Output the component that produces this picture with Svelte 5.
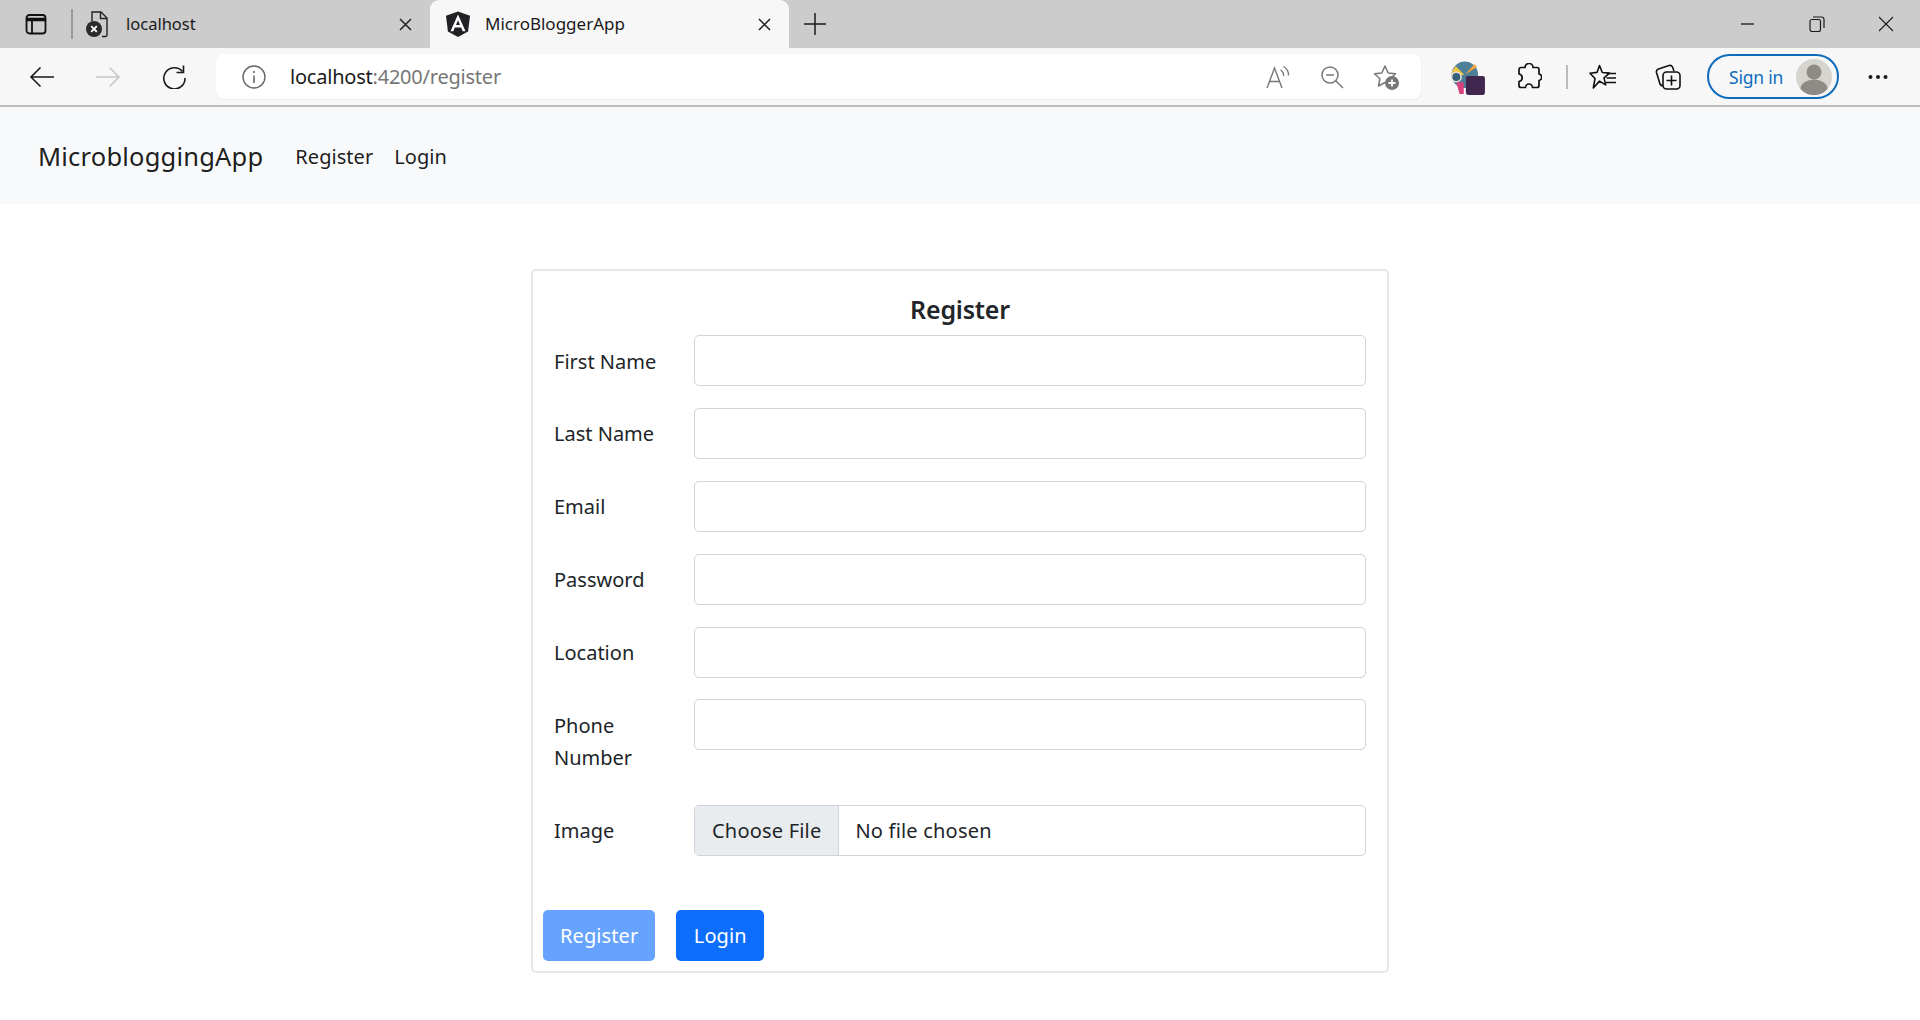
<script>
	const fields = ["First Name", "Last Name", "Email", "Password", "Location", "Phone Number"];
</script>

<div class="chrome">
	<div class="tabstrip">
		<svg class="sidebar-icon" width="22" height="22" viewBox="0 0 22 22" fill="none" stroke="#111" stroke-width="1.800">
			<rect x="1.500" y="2" width="19" height="18.500" rx="3" />
			<path d="M1.500 6.500h19" stroke-width="3.500" />
			<path d="M7 7v13" />
		</svg>
		<span class="tab-divider"></span>
		<div class="tab inactive">
			<svg width="22" height="28" viewBox="0 0 22 28" fill="none">
				<path d="M6 11V2h9l6 6v17a1.500 1.500 0 0 1-1.500 1.500H16" stroke="#222" stroke-width="1.400" />
				<path d="M14.500 2v6.500H21" stroke="#222" stroke-width="1.400" />
				<circle cx="8" cy="19" r="8" fill="#2b2b2b" />
				<path d="M5.200 16.200l5.600 5.600M10.800 16.200l-5.600 5.600" stroke="#fff" stroke-width="1.900" />
			</svg>
			<span class="tab-title">localhost</span>
			<svg class="close" width="13" height="13" viewBox="0 0 13 13" stroke="#1f1f1f" stroke-width="1.500"><path d="M1 1l11 11M12 1L1 12" /></svg>
		</div>
		<div class="tab active">
			<svg width="26" height="26" viewBox="0 0 26 26">
				<path d="M13 0.500L1 4.800l1.900 15.800L13 26l10.100-5.400L25 4.800z" fill="#202124" />
				<path d="M13 3.500L5.500 20.200h2.800l1.500-3.800h6.400l1.500 3.800h2.800zM11 14l2-4.800 2 4.800z" fill="#fff" />
			</svg>
			<span class="tab-title">MicroBloggerApp</span>
			<svg class="close" width="13" height="13" viewBox="0 0 13 13" stroke="#1f1f1f" stroke-width="1.500"><path d="M1 1l11 11M12 1L1 12" /></svg>
		</div>
		<svg class="new-tab" width="22" height="22" viewBox="0 0 22 22" stroke="#1a1a1a" stroke-width="1.500"><path d="M11 0v22M0 11h22" /></svg>
		<div class="window-controls">
			<svg width="16" height="16" viewBox="0 0 16 16" stroke="#1a1a1a" stroke-width="1.300"><path d="M1 8h13" /></svg>
			<svg width="16" height="16" viewBox="0 0 16 16" fill="none" stroke="#1a1a1a" stroke-width="1.200"><rect x="1" y="3.500" width="10.500" height="12" rx="2" /><path d="M4 1h8.500A2.500 2.500 0 0 1 15 3.500V12" /></svg>
			<svg width="16" height="16" viewBox="0 0 16 16" stroke="#1a1a1a" stroke-width="1.100"><path d="M1 1l14 14M15 1L1 15" /></svg>
		</div>
	</div>

	<div class="toolbar">
		<svg class="nav-back" width="26" height="22" viewBox="0 0 26 22" fill="none" stroke="#1a1a1a" stroke-width="1.600"><path d="M25 11H2M11.500 1.500L2 11l9.500 9.500" /></svg>
		<svg class="nav-forward" width="26" height="22" viewBox="0 0 26 22" fill="none" stroke="#c8c8c8" stroke-width="1.600"><path d="M1 11h23M14.500 1.500L24 11l-9.500 9.500" /></svg>
		<svg class="nav-reload" width="24" height="24" viewBox="0 0 24 24" fill="none" stroke="#1a1a1a" stroke-width="1.600"><path d="M20.500 6.500A10.600 10.600 0 1 0 23 13" /><path d="M21.500 0.500v7h-7" /></svg>
		<div class="address">
			<svg width="24" height="24" viewBox="0 0 24 24" fill="none" stroke="#666" stroke-width="1.400"><circle cx="12" cy="12" r="11" /><path d="M12 10.500V18M12 6v2" stroke-width="1.600" /></svg>
			<div class="url"><span class="host">localhost</span>:4200/register</div>
			<svg class="addr-first" width="26" height="24" viewBox="0 0 26 24" fill="none" stroke="#777" stroke-width="1.400">
				<path d="M1 23L8.500 3 16 23M3.500 16.500h10" />
				<path d="M14.500 5a6 6 0 0 1 3 6M17.500 1.500a10 10 0 0 1 5 9" />
			</svg>
			<svg width="24" height="24" viewBox="0 0 24 24" fill="none" stroke="#777" stroke-width="1.500"><circle cx="10" cy="10" r="8" /><path d="M6 10h8M15.500 15.500l7.500 7.500" /></svg>
			<svg width="28" height="26" viewBox="0 0 28 26" fill="none">
				<path d="M13 2l3.200 7 7.300.8-5.400 5 1.400 7.200L13 18.500 6.500 22l1.400-7.200-5.400-5 7.300-.8z" stroke="#777" stroke-width="1.500" stroke-linejoin="round" />
				<circle cx="20" cy="19" r="7" fill="#777" />
				<path d="M20 15.500v7M16.500 19h7" stroke="#fff" stroke-width="1.800" />
			</svg>
		</div>
		<div class="extension">
			<svg width="36" height="36" viewBox="0 0 34 34">
				<circle cx="14" cy="14" r="12.500" fill="#4d7f99" />
				<path d="M1.500 15a12.500 12.500 0 0 1 4-9l8 8z" fill="#f4c542" />
				<path d="M14 14l9-10 2.500 2.500z" fill="#f7a13b" />
				<circle cx="6" cy="16" r="4.500" fill="#38607a" stroke="#e7e2d8" stroke-width="1.500" />
				<path d="M6 21l7 0 0 11-4 0z" fill="#d9417c" />
				<rect x="15" y="15" width="18" height="18" rx="2" fill="#41264f" />
			</svg>
		</div>
		<svg class="puzzle" width="26" height="28" viewBox="0 0 26 28" fill="none" stroke="#111" stroke-width="1.700" stroke-linejoin="round">
			<path d="M9 4.500a4 4 0 0 1 8 0h4a2 2 0 0 1 2 2V11a3.300 3.300 0 0 1 0 6.500v5a2 2 0 0 1-2 2h-4.500a3.500 3.500 0 0 0-7 0H5a2 2 0 0 1-2-2v-4a3.800 3.800 0 0 0 0-7.500V6.500a2 2 0 0 1 2-2z" />
		</svg>
		<span class="tool-divider"></span>
		<svg class="fav-list" width="28" height="26" viewBox="0 0 28 26" fill="none" stroke="#111" stroke-width="1.600" stroke-linejoin="round">
			<path d="M10.500 1.500l2.800 7 7.200.6-5.500 4.800 1.700 7-6.200-3.800L4.300 24l1.700-9.500-5-5.300 7-.8z" />
			<path d="M18 9.500h9M17.500 14h9.500M17 18.500h10" stroke-width="1.500" />
		</svg>
		<svg class="collections" width="26" height="28" viewBox="0 0 26 28" fill="none" stroke="#111" stroke-width="1.600">
			<path d="M8 23a4 4 0 0 1-3-2L1.500 9.500a3 3 0 0 1 2-3.500L14 2.500a3 3 0 0 1 3.500 1.500L19 8" />
			<rect x="8" y="9" width="17" height="17" rx="3.500" />
			<path d="M16.500 12.500v10M11.500 17.500h10" />
		</svg>
		<div class="signin">
			<span>Sign in</span>
			<svg width="36" height="36" viewBox="0 0 36 36">
				<circle cx="18" cy="18" r="18" fill="#d6d4cf" />
				<circle cx="18" cy="13" r="7.500" fill="#8e8b87" />
				<path d="M4.500 30a13.500 9.500 0 0 1 27 0 18 18 0 0 1-27 0z" fill="#8e8b87" />
			</svg>
		</div>
		<svg class="more" width="20" height="6" viewBox="0 0 20 6" fill="#1a1a1a"><circle cx="2.500" cy="3" r="2" /><circle cx="10" cy="3" r="2" /><circle cx="17.500" cy="3" r="2" /></svg>
	</div>
</div>

<nav class="navbar">
	<a class="brand" href="#top">MicrobloggingApp</a>
	<a class="nav-link" href="#top">Register</a>
	<a class="nav-link" href="#top">Login</a>
</nav>

<main>
	<form class="card">
		<h2>Register</h2>
		{#each fields as field}
			<div class="row">
				<label for={field}>{field}</label>
				<input id={field} class="form-control" type="text" />
			</div>
		{/each}
		<div class="row image-row">
			<span class="label">Image</span>
			<div class="form-control file">
				<span class="file-button">Choose File</span>
				<span class="file-name">No file chosen</span>
			</div>
		</div>
		<div class="actions">
			<button type="button" class="btn disabled">Register</button>
			<button type="button" class="btn">Login</button>
		</div>
	</form>
</main>

<style>
	:global(body) {
		margin: 0;
		background: #fff;
		font-family: "Noto Sans", "Open Sans", sans-serif;
		color: #212529;
	}

	svg {
		display: block;
		flex: none;
	}

	.chrome {
		font-family: "Noto Sans", sans-serif;
	}

	.tabstrip {
		height: 48px;
		background: #ccc;
		display: flex;
		align-items: center;
		padding-left: 25px;
		box-sizing: border-box;
	}

	.tab-divider {
		width: 2px;
		height: 30px;
		background: #999;
		margin-left: 24px;
		margin-right: 15px;
	}

	.tab {
		display: flex;
		align-items: center;
		height: 48px;
		box-sizing: border-box;
		font-size: 17px;
		color: #1a1a1a;
	}

	.inactive {
		width: 342px;
		padding-right: 18px;
	}

	.inactive svg:first-child {
		margin-left: -2px;
	}

	.inactive .tab-title {
		margin-left: 18px;
		font-size: 16.500px;
	}

	.active {
		width: 359px;
		background: #f7f7f7;
		border-radius: 9px 9px 0 0;
		padding: 0 18px 0 15px;
	}

	.active .tab-title {
		margin-left: 14px;
	}

	.tab-title {
		position: relative;
		top: -1px;
	}

	.close {
		margin-left: auto;
	}

	.new-tab {
		margin-left: 15px;
	}

	.window-controls {
		margin-left: auto;
		display: flex;
		gap: 53px;
		padding-right: 26px;
	}

	.toolbar {
		height: 59px;
		box-sizing: border-box;
		background: #f7f7f7;
		border-bottom: 2px solid #bbb;
		display: flex;
		align-items: center;
		padding-left: 29px;
	}

	.nav-forward {
		margin-left: 40px;
	}

	.nav-reload {
		margin-left: 41px;
	}

	.address {
		width: 1205px;
		height: 45px;
		margin-left: 30px;
		box-sizing: border-box;
		background: #fff;
		border-radius: 8px;
		display: flex;
		align-items: center;
		padding: 0 21px 0 26px;
		box-shadow: 0 1px 2px rgba(0, 0, 0, 0.06);
	}

	.url {
		margin-left: 24px;
		font-size: 20px;
		letter-spacing: -0.22px;
		color: #767676;
	}

	.host {
		color: #1a1a1a;
	}

	.address svg + svg {
		margin-left: 28px;
	}

	.address .addr-first {
		margin-left: auto;
	}

	.extension {
		margin-left: 29px;
		padding-top: 3px;
	}

	.puzzle {
		margin-left: 30px;
	}

	.tool-divider {
		width: 2px;
		height: 24px;
		background: #bbb;
		margin-left: 24px;
	}

	.fav-list {
		margin-left: 21px;
	}

	.collections {
		margin-left: 38px;
	}

	.signin {
		width: 132px;
		height: 45px;
		box-sizing: border-box;
		margin-left: 26px;
		border: 2px solid #0f6cbd;
		border-radius: 23px;
		display: flex;
		align-items: center;
		justify-content: space-between;
		padding: 0 5px 0 20px;
		color: #0f6cbd;
		font-size: 17.500px;
		letter-spacing: -0.2px;
	}

	.more {
		margin-left: 29px;
	}

	.navbar {
		height: 97px;
		background: #f8f9fa;
		display: flex;
		align-items: center;
		padding-left: 38px;
		box-sizing: border-box;
	}

	.navbar a {
		text-decoration: none;
		color: rgba(0, 0, 0, 0.9);
	}

	.brand {
		font-size: 25.500px;
		letter-spacing: 0.2px;
		margin-right: 32px;
	}

	.nav-link {
		font-size: 20px;
		letter-spacing: 0.05px;
		margin-right: 21px;
		padding-top: 1px;
	}

	main {
		display: flex;
		justify-content: center;
		padding-top: 65px;
	}

	.card {
		width: 858px;
		height: 704px;
		box-sizing: border-box;
		border: 2px solid #e6e7e9;
		border-radius: 5px;
		padding: 0 21px;
		font-size: 20px;
	}

	h2 {
		margin: 19px 0 0;
		height: 45px;
		font-size: 25px;
		line-height: 38px;
		font-weight: 600;
		text-align: center;
		letter-spacing: -0.2px;
	}

	.row {
		display: grid;
		grid-template-columns: 140px 1fr;
		margin-bottom: 21.900px;
	}

	.row label,
	.label {
		padding-top: 10.500px;
		padding-right: 20px;
		line-height: 32px;
	}

	.form-control {
		height: 51px;
		box-sizing: border-box;
		width: 100%;
		border: 1px solid #ced4da;
		border-radius: 5px;
		background: #fff;
	}

	.row:nth-of-type(6) {
		margin-bottom: 31px;
	}

	.file {
		display: flex;
		align-items: center;
		overflow: hidden;
		color: #212529;
		letter-spacing: 0.2px;
	}

	.file-button {
		background: #e9ecef;
		height: 100%;
		display: flex;
		align-items: center;
		padding: 0 17px;
		border-right: 1px solid #ced4da;
		margin-right: 16px;
	}

	.actions {
		display: flex;
		gap: 21px;
		margin: 54px 0 0 -11px;
	}

	.btn {
		height: 51px;
		padding: 0 17.500px;
		border: 0;
		border-radius: 5px;
		background: #0d6efd;
		color: #fff;
		font: inherit;
		letter-spacing: 0.1px;
	}

	.disabled {
		background: #66a3fe;
		padding: 0 17px;
	}
</style>
